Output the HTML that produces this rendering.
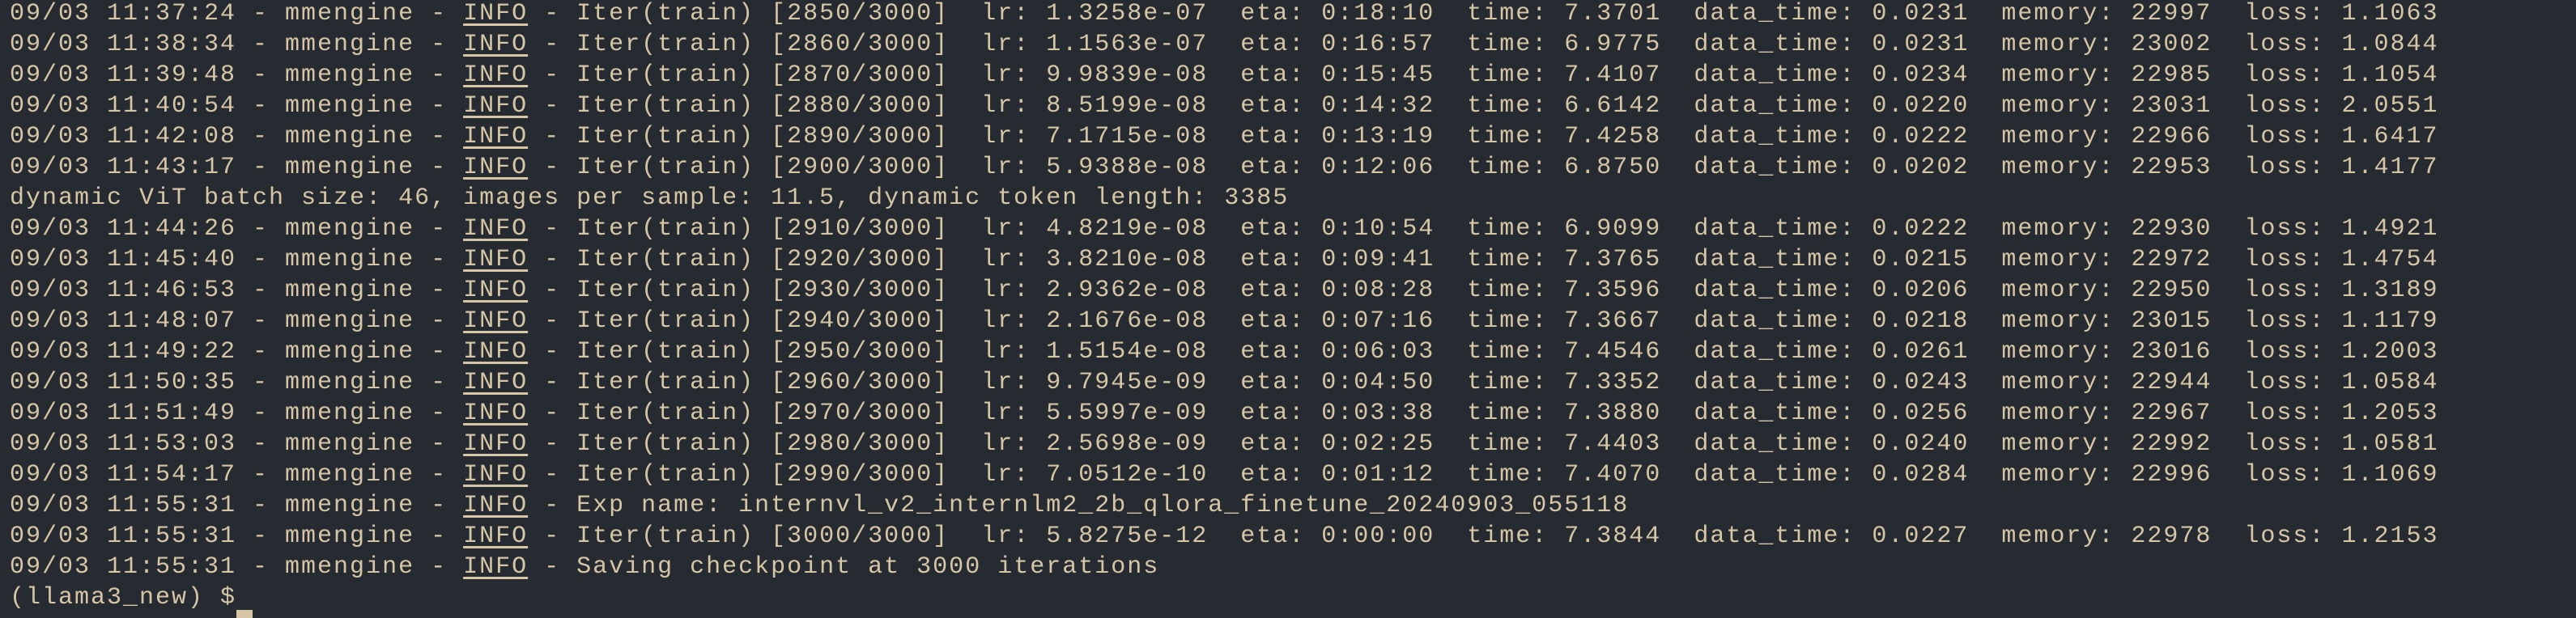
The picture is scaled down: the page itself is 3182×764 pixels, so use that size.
<!DOCTYPE html>
<html><head><meta charset="utf-8"><style>
html,body{margin:0;padding:0;background:#262b32;width:3182px;height:760px;overflow:hidden}
pre{margin:0;position:absolute;left:12px;top:-2px;font-family:"Liberation Mono",monospace;font-size:30px;letter-spacing:2px;line-height:38px;color:#d6c6a6;white-space:pre}
u{text-decoration:underline;text-underline-offset:5px;text-decoration-thickness:3px}
.c{position:absolute;left:292px;top:754px;width:20px;height:10px;background:#d6c6a6}
</style></head><body><pre>09/03 11:37:24 - mmengine - <u>INFO</u> - Iter(train) [2850/3000]  lr: 1.3258e-07  eta: 0:18:10  time: 7.3701  data_time: 0.0231  memory: 22997  loss: 1.1063
09/03 11:38:34 - mmengine - <u>INFO</u> - Iter(train) [2860/3000]  lr: 1.1563e-07  eta: 0:16:57  time: 6.9775  data_time: 0.0231  memory: 23002  loss: 1.0844
09/03 11:39:48 - mmengine - <u>INFO</u> - Iter(train) [2870/3000]  lr: 9.9839e-08  eta: 0:15:45  time: 7.4107  data_time: 0.0234  memory: 22985  loss: 1.1054
09/03 11:40:54 - mmengine - <u>INFO</u> - Iter(train) [2880/3000]  lr: 8.5199e-08  eta: 0:14:32  time: 6.6142  data_time: 0.0220  memory: 23031  loss: 2.0551
09/03 11:42:08 - mmengine - <u>INFO</u> - Iter(train) [2890/3000]  lr: 7.1715e-08  eta: 0:13:19  time: 7.4258  data_time: 0.0222  memory: 22966  loss: 1.6417
09/03 11:43:17 - mmengine - <u>INFO</u> - Iter(train) [2900/3000]  lr: 5.9388e-08  eta: 0:12:06  time: 6.8750  data_time: 0.0202  memory: 22953  loss: 1.4177
dynamic ViT batch size: 46, images per sample: 11.5, dynamic token length: 3385
09/03 11:44:26 - mmengine - <u>INFO</u> - Iter(train) [2910/3000]  lr: 4.8219e-08  eta: 0:10:54  time: 6.9099  data_time: 0.0222  memory: 22930  loss: 1.4921
09/03 11:45:40 - mmengine - <u>INFO</u> - Iter(train) [2920/3000]  lr: 3.8210e-08  eta: 0:09:41  time: 7.3765  data_time: 0.0215  memory: 22972  loss: 1.4754
09/03 11:46:53 - mmengine - <u>INFO</u> - Iter(train) [2930/3000]  lr: 2.9362e-08  eta: 0:08:28  time: 7.3596  data_time: 0.0206  memory: 22950  loss: 1.3189
09/03 11:48:07 - mmengine - <u>INFO</u> - Iter(train) [2940/3000]  lr: 2.1676e-08  eta: 0:07:16  time: 7.3667  data_time: 0.0218  memory: 23015  loss: 1.1179
09/03 11:49:22 - mmengine - <u>INFO</u> - Iter(train) [2950/3000]  lr: 1.5154e-08  eta: 0:06:03  time: 7.4546  data_time: 0.0261  memory: 23016  loss: 1.2003
09/03 11:50:35 - mmengine - <u>INFO</u> - Iter(train) [2960/3000]  lr: 9.7945e-09  eta: 0:04:50  time: 7.3352  data_time: 0.0243  memory: 22944  loss: 1.0584
09/03 11:51:49 - mmengine - <u>INFO</u> - Iter(train) [2970/3000]  lr: 5.5997e-09  eta: 0:03:38  time: 7.3880  data_time: 0.0256  memory: 22967  loss: 1.2053
09/03 11:53:03 - mmengine - <u>INFO</u> - Iter(train) [2980/3000]  lr: 2.5698e-09  eta: 0:02:25  time: 7.4403  data_time: 0.0240  memory: 22992  loss: 1.0581
09/03 11:54:17 - mmengine - <u>INFO</u> - Iter(train) [2990/3000]  lr: 7.0512e-10  eta: 0:01:12  time: 7.4070  data_time: 0.0284  memory: 22996  loss: 1.1069
09/03 11:55:31 - mmengine - <u>INFO</u> - Exp name: internvl_v2_internlm2_2b_qlora_finetune_20240903_055118
09/03 11:55:31 - mmengine - <u>INFO</u> - Iter(train) [3000/3000]  lr: 5.8275e-12  eta: 0:00:00  time: 7.3844  data_time: 0.0227  memory: 22978  loss: 1.2153
09/03 11:55:31 - mmengine - <u>INFO</u> - Saving checkpoint at 3000 iterations
(llama3_new) $</pre><div class="c"></div></body></html>
